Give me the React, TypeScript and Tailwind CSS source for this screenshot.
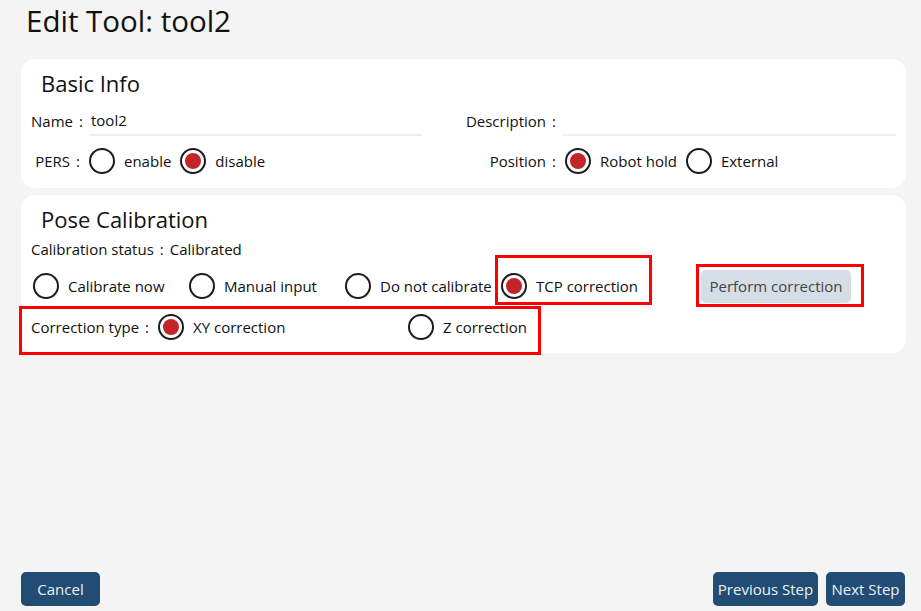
import React from "react";

const font = { fontFamily: '"Open Sans", "Noto Sans CJK SC", sans-serif' };

function Colon() {
  return <span className="inline-block w-[16px] text-center">:</span>;
}

function Radio({ checked, label, className = "" }: { checked?: boolean; label: string; className?: string }) {
  return (
    <div className={`flex items-center ${className}`}>
      <span className="w-[26px] h-[26px] rounded-full border-2 border-[#1c1c1c] flex items-center justify-center shrink-0">
        {checked && <span className="w-[16px] h-[16px] rounded-full bg-[#c3242c]" />}
      </span>
      <span className="ml-[9px] text-[15px] text-[#111] whitespace-nowrap">{label}</span>
    </div>
  );
}

function Btn({ children, className = "" }: { children: React.ReactNode; className?: string }) {
  return (
    <button className={`h-[34px] rounded-[5px] bg-[#214c73] text-[#eef2f6] text-[15px] flex items-center justify-center ${className}`}>
      {children}
    </button>
  );
}

export default function App() {
  return (
    <div className="w-[921px] h-[611px] bg-[#f4f4f4] flex flex-col" style={font}>
      <h1 className="pl-[26px] pt-[1px] h-[59px] text-[29.5px] leading-[40px] text-[#111]">Edit Tool: tool2</h1>

      {/* Basic Info */}
      <section className="mx-[21px] w-[885px] h-[129px] bg-white rounded-[14px] px-[10px] pt-[9px]">
        <h2 className="pl-[10px] text-[22px] leading-[30px] text-[#111]">Basic Info</h2>
        <div className="flex mt-[8px] h-[30px] items-center">
          <div className="flex items-center w-[432px]">
            <span className="w-[58px] pr-[3px] text-right text-[15px] text-[#111] whitespace-nowrap">Name<Colon /></span>
            <div className="w-[333px] h-[30px] border-b-2 border-[#eeeeee] flex items-center pl-[2px] text-[15px] text-[#111]">tool2</div>
          </div>
          <div className="flex items-center flex-1">
            <span className="w-[100px] pr-[1px] text-right text-[15px] text-[#111] whitespace-nowrap">Description<Colon /></span>
            <div className="flex-1 h-[30px] border-b-2 border-[#eeeeee]" />
          </div>
        </div>
        <div className="flex mt-[10px] h-[30px] items-center">
          <div className="flex items-center w-[432px]">
            <span className="w-[58px] pr-[3px] text-right text-[15px] text-[#111] whitespace-nowrap">PERS<Colon /></span>
            <Radio label="enable" />
            <Radio label="disable" checked className="ml-[9px]" />
          </div>
          <div className="flex items-center flex-1">
            <span className="w-[102px] pr-[3px] text-right text-[15px] text-[#111] whitespace-nowrap">Position<Colon /></span>
            <Radio label="Robot hold" checked />
            <Radio label="External" className="ml-[9px]" />
          </div>
        </div>
      </section>

      {/* Pose Calibration */}
      <section className="relative mx-[21px] mt-[7px] w-[885px] h-[158px] bg-white rounded-[14px] pl-[10px] pt-[9px]">
        <h2 className="pl-[10px] text-[22px] leading-[30px] text-[#111]">Pose Calibration</h2>
        <div className="mt-[2px] h-[26px] flex items-center text-[15px] text-[#111] whitespace-pre">
          Calibration status<Colon />Calibrated
        </div>
        <div className="flex items-center ml-[-5px] mt-[7px] h-[34px]">
          <Radio label="Calibrate now" className="w-[156px] pl-[7px]" />
          <Radio label="Manual input" className="w-[156px] pl-[7px]" />
          <Radio label="Do not calibrate" className="w-[156px] pl-[7px]" />
          <Radio label="TCP correction" checked className="w-[156px] pl-[7px]" />
          <button className="ml-[51px] w-[150px] h-[33px] rounded-[5px] bg-[#d5dde7] text-[15px] text-[#444]">Perform correction</button>
        </div>
        <div className="flex items-center mt-[7px] h-[34px]">
          <span className="w-[120px] text-[15px] text-[#111] whitespace-nowrap">Correction type<Colon /></span>
          <Radio label="XY correction" checked className="w-[250px] pl-[7px]" />
          <Radio label="Z correction" className="pl-[7px]" />
        </div>

        {/* annotation boxes */}
        <div className="absolute left-[474px] top-[60px] w-[157px] h-[50px] border-[3px] border-[#ff0000]" />
        <div className="absolute left-[675px] top-[69px] w-[168px] h-[43px] border-[3px] border-[#ff0000]" />
        <div className="absolute left-[-2px] top-[111px] w-[522px] h-[49px] border-[3px] border-[#ff0000]" />
      </section>

      <div className="flex-1" />

      <div className="flex items-center pl-[21px] pr-[16px] pb-[5px]">
        <Btn className="w-[79px]">Cancel</Btn>
        <div className="flex-1" />
        <Btn className="w-[105px]">Previous Step</Btn>
        <Btn className="w-[79px] ml-[8px]">Next Step</Btn>
      </div>
    </div>
  );
}
